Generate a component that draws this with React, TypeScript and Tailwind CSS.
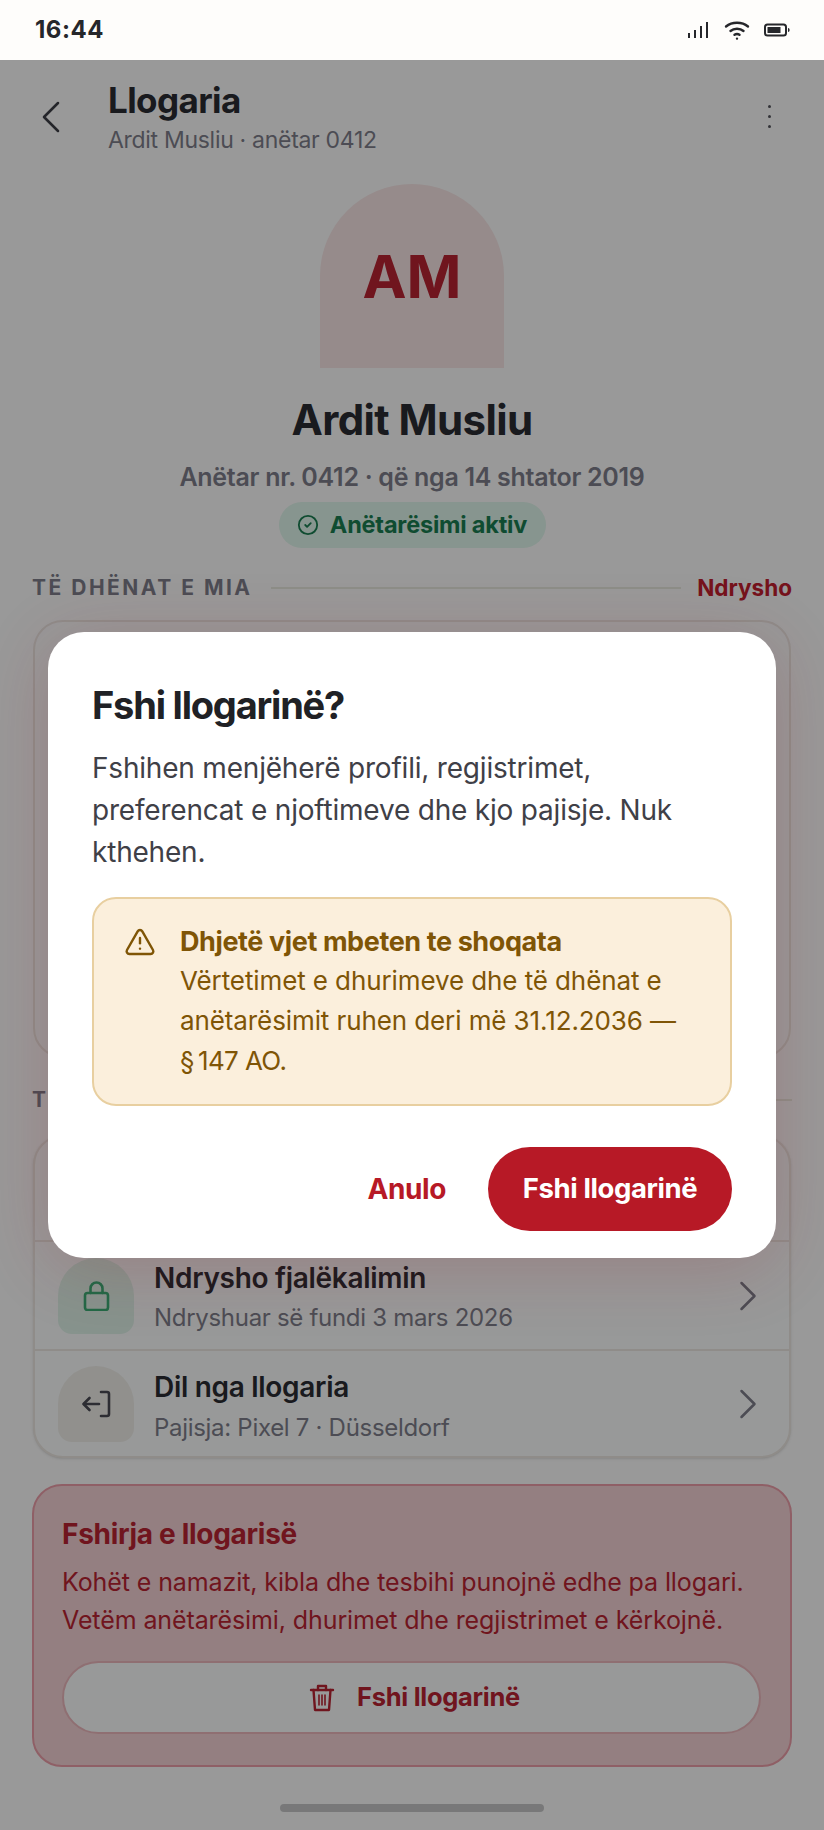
import { ChevronLeft, ChevronRight, CircleCheck, TriangleAlert } from 'lucide-react'

function SignalIcon() {
  return (
    <svg width="22" height="18" viewBox="0 0 22 18" fill="#26272b">
      <rect x="0" y="12" width="2" height="5" />
      <rect x="6" y="9" width="2" height="8" />
      <rect x="12" y="5" width="2" height="12" />
      <rect x="18" y="1" width="2" height="16" />
    </svg>
  )
}

function WifiIcon() {
  return (
    <svg width="26" height="20" viewBox="0 0 26 20" fill="none" stroke="#26272b" strokeWidth="2.4" strokeLinecap="round">
      <path d="M2 6.5C8 1.5 18 1.5 24 6.5" />
      <path d="M6.5 11C10 8 16 8 19.5 11" />
      <path d="M10.5 14.8C12 13.8 14 13.8 15.5 14.8" />
      <circle cx="13" cy="18.6" r="0.6" fill="#26272b" strokeWidth="1.2" />
    </svg>
  )
}

function BatteryIcon() {
  return (
    <svg width="26" height="14" viewBox="0 0 26 14" fill="none">
      <rect x="1" y="1.5" width="21" height="11" rx="2.5" stroke="#26272b" strokeWidth="2" />
      <rect x="3.5" y="4" width="13" height="6" fill="#26272b" />
      <path d="M24 5v4c1 0 1.6-.8 1.6-2S25 5 24 5z" fill="#26272b" />
    </svg>
  )
}

function LockIcon() {
  return (
    <svg width="27" height="30" viewBox="0 0 27 30" fill="none" stroke="#39b077" strokeWidth="2.6" strokeLinecap="round" strokeLinejoin="round">
      <rect x="2" y="12" width="23" height="17" rx="2.5" />
      <path d="M7.5 12V7.5a6 6 0 0 1 12 0V12" />
    </svg>
  )
}

function SignOutIcon() {
  return (
    <svg width="30" height="28" viewBox="0 0 30 28" fill="none" stroke="#4b4c55" strokeWidth="2.6" strokeLinecap="round" strokeLinejoin="round">
      <path d="M20 2h6a2 2 0 0 1 2 2v20a2 2 0 0 1-2 2h-6" />
      <path d="M18 14H3" />
      <path d="M8.5 8L2.5 14l6 6" />
    </svg>
  )
}

function TrashIcon() {
  return (
    <svg width="26" height="28" viewBox="0 0 26 28" fill="none" stroke="#bb2433" strokeWidth="2.4" strokeLinecap="round" strokeLinejoin="round">
      <path d="M2 6h22" />
      <path d="M9 6V2h8v4" />
      <path d="M4.5 6l1.5 20h14l1.5-20" />
      <path d="M10 11v10M13 11v10M16 11v10" strokeWidth="1.6" />
    </svg>
  )
}

function SectionHeader({ label, action }: { label: string; action?: string }) {
  return (
    <div className="flex h-[28px] items-center">
      <span className="text-[21px] font-bold tracking-[2.5px] text-[#7f7f8c]">{label}</span>
      <div className="ml-[18px] h-[2px] flex-1 bg-[#ecede3]" />
      {action && <span className="ml-[16px] text-[22.5px] font-bold text-[#c4202f]">{action}</span>}
    </div>
  )
}

export default function App() {
  return (
    <div className="relative h-[1830px] w-[824px] overflow-hidden bg-white font-['Inter',sans-serif]">
      {/* Status bar stays above the scrim */}
      <div className="flex h-[60px] items-center justify-between bg-[#fefdfb] pl-[35px] pr-[34px]">
        <span className="text-[24px] font-bold tracking-[0.5px] text-[#26272b]">16:44</span>
        <div className="flex items-center gap-[14px]">
          <SignalIcon />
          <WifiIcon />
          <BatteryIcon />
        </div>
      </div>

      {/* Account page */}
      <div className="flex items-start pl-[23px] pr-[36px] pt-[20px]">
        <ChevronLeft size={56} strokeWidth={1.1} className="mt-[9px] text-[#3d3e46]" />
        <div className="ml-[29px] flex-1">
          <div className="text-[35px] font-bold leading-[40px] tracking-[-0.6px] text-[#2b2c32]">Llogaria</div>
          <div className="mt-[2px] text-[23px] leading-[36px] tracking-[-0.3px] text-[#7f7f8c]">Ardit Musliu · anëtar 0412</div>
        </div>
        <div className="mr-[17px] mt-[25px] flex flex-col gap-[7px]">
          <div className="h-[3px] w-[3px] rounded-full bg-[#55565e]" />
          <div className="h-[3px] w-[3px] rounded-full bg-[#55565e]" />
          <div className="h-[3px] w-[3px] rounded-full bg-[#55565e]" />
        </div>
      </div>

      <div className="flex flex-col items-center">
        <div className="mt-[26px] flex h-[184px] w-[184px] items-center justify-center rounded-t-full bg-[#fae8e8]">
          <span className="text-[59px] font-bold leading-none text-[#bb2433]">AM</span>
        </div>
        <div className="mt-[27px] text-[42px] font-bold leading-[50px] tracking-[-0.6px] text-[#2b2c32]">Ardit Musliu</div>
        <div className="mt-[16px] text-[25px] font-semibold leading-[32px] tracking-[-0.3px] text-[#7f7f8c]">
          Anëtar nr. 0412 · që nga 14 shtator 2019
        </div>
        <div className="mt-[9px] flex h-[46px] w-[267px] items-center justify-center gap-[11px] rounded-full bg-[#e1f8ee]">
          <CircleCheck size={22} strokeWidth={2} className="text-[#1a7f52]" />
          <span className="text-[23.5px] font-bold tracking-[-0.2px] text-[#1a7f52]">Anëtarësimi aktiv</span>
        </div>
      </div>

      <div className="mt-[26px] px-[32px]">
        <SectionHeader label="TË DHËNAT E MIA" action="Ndrysho" />
        <div className="mx-[1px] mt-[18px] h-[438px] rounded-[30px] border-2 border-[#eeeae4] bg-[#fdffff]" />

        <div className="mt-[28px]">
          <SectionHeader label="TË TJERA" />
        </div>

        <div className="mx-[1px] mt-[21px] overflow-hidden rounded-[30px] border-2 border-[#eeeae4] bg-[#fdffff] shadow-sm">
          <div className="h-[105px] border-b-2 border-[#eeeae4]" />
          <div className="flex h-[109px] items-center border-b-2 border-[#eeeae4] pl-[23px] pr-[15px]">
            <div className="flex h-[76px] w-[76px] items-center justify-center rounded-t-[38px] rounded-b-[14px] bg-[#e2f5ec]">
              <LockIcon />
            </div>
            <div className="ml-[20px] flex-1 pt-[3px]">
              <div className="text-[28px] font-semibold leading-[36px] tracking-[-0.3px] text-[#2b2c32]">Ndrysho fjalëkalimin</div>
              <div className="mt-[6px] text-[24px] leading-[32px] tracking-[-0.3px] text-[#7f7f8c]">Ndryshuar së fundi 3 mars 2026</div>
            </div>
            <ChevronRight size={52} strokeWidth={1.15} className="text-[#7f7f8c]" />
          </div>
          <div className="flex h-[105px] items-center pl-[23px] pr-[15px]">
            <div className="flex h-[76px] w-[76px] items-center justify-center rounded-t-[38px] rounded-b-[14px] bg-[#f2f1ec]">
              <SignOutIcon />
            </div>
            <div className="ml-[20px] flex-1 pt-[5px]">
              <div className="text-[28px] font-semibold leading-[36px] tracking-[-0.3px] text-[#2b2c32]">Dil nga llogaria</div>
              <div className="mt-[7px] text-[24px] leading-[32px] tracking-[-0.3px] text-[#7f7f8c]">Pajisja: Pixel 7 · Düsseldorf</div>
            </div>
            <ChevronRight size={52} strokeWidth={1.15} className="text-[#7f7f8c]" />
          </div>
        </div>

        <div className="mt-[26px] h-[283px] rounded-[30px] border-2 border-[#ee9faa] bg-[#f7d4d7] pl-[28px] pr-[29px] pt-[31px]">
          <div className="text-[28px] font-bold leading-[34px] tracking-[-0.3px] text-[#bb2433]">Fshirja e llogarisë</div>
          <div className="mt-[12px] text-[25px] leading-[38px] tracking-[-0.1px] text-[#bb2433]">
            Kohët e namazit, kibla dhe tesbihi punojnë edhe pa llogari.
            <br />
            Vetëm anëtarësimi, dhurimet dhe regjistrimet e kërkojnë.
          </div>
          <div className="mt-[22px] flex h-[73px] items-center justify-center gap-[22px] rounded-full border-2 border-[#eeb9bf] bg-[#fdffff] pl-[6px]">
            <TrashIcon />
            <span className="text-[25.5px] font-bold tracking-[-0.3px] text-[#bb2433]">Fshi llogarinë</span>
          </div>
        </div>
      </div>

      <div className="mx-auto mt-[37px] h-[8px] w-[264px] rounded-full bg-[#c8c9ca]" />

      {/* Scrim and confirmation dialog */}
      <div className="absolute inset-x-0 bottom-0 top-[60px] flex items-center justify-center bg-black/40">
        <div className="flex h-[626px] w-[728px] flex-col rounded-[36px] bg-white px-[44px] pt-[48px] shadow-[0_10px_70px_rgba(150,30,40,0.2)]">
          <div className="text-[38px] font-bold leading-[50px] tracking-[-1.2px] text-[#202125]">Fshi llogarinë?</div>
          <div className="mt-[17px] text-[28px] leading-[42px] tracking-[-0.2px] text-[#3f4047]">
            Fshihen menjëherë profili, regjistrimet, preferencat e njoftimeve dhe kjo pajisje. Nuk kthehen.
          </div>
          <div className="mt-[24px] flex h-[209px] rounded-[24px] border-2 border-[#e8cfa0] bg-[#fbefdc] pl-[30px] pr-[30px] pt-[24px]">
            <TriangleAlert size={32} strokeWidth={1.8} className="mt-[3px] shrink-0 text-[#7f5506]" />
            <div className="ml-[24px] text-[#7f5506]">
              <div className="text-[27px] font-bold leading-[38px] tracking-[-0.4px]">Dhjetë vjet mbeten te shoqata</div>
              <div className="text-[26px] leading-[40px] tracking-[-0.1px]">
                Vërtetimet e dhurimeve dhe të dhënat e anëtarësimit ruhen deri më 31.12.2036 —{' '}
                <span className="whitespace-nowrap tracking-[-0.6px]">§{'\u2009'}147 AO.</span>
              </div>
            </div>
          </div>
          <div className="mt-[41px] flex items-center justify-end">
            <span className="text-[28px] font-bold tracking-[-0.4px] text-[#b71926]">Anulo</span>
            <div className="ml-[42px] flex h-[84px] w-[244px] items-center justify-center rounded-full bg-[#b71926] text-[27.5px] font-bold tracking-[-0.4px] text-white">
              Fshi llogarinë
            </div>
          </div>
        </div>
      </div>
    </div>
  )
}
